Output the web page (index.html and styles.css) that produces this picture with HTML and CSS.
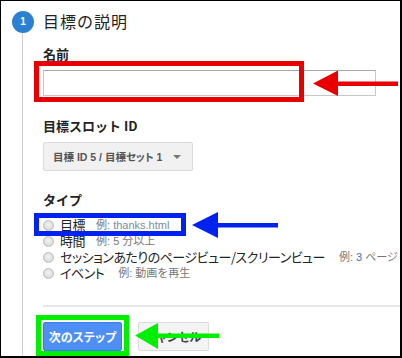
FILE: index.html
```html
<!DOCTYPE html>
<html lang="ja">
<head>
    <meta charset="UTF-8">
    <meta name="viewport" content="width=device-width, initial-scale=1.0">
    <title>目標の説明</title>
    <link rel="stylesheet" href="styles.css">
</head>
<body>

<div class="shot">
    <div class="frame">
        <!-- step rail -->
        <div class="rail">
            <div class="step-num">1</div>
            <div class="rail-line"></div>
        </div>

        <div class="panel">
            <h2 class="title">目標の説明</h2>

            <label class="field-label" for="goal_name">名前</label>
            <input type="text" class="text-input" id="goal_name">

            <div class="field-label slot-label">目標スロット ID</div>
            <div class="select-btn">
                <span>目標 ID 5 / 目標セット 1</span>
                <span class="caret"></span>
            </div>

            <div class="field-label type-label">タイプ</div>
            <ul class="type-list">
                <li><input type="radio" name="type" class="radio"><span class="type-name">目標</span><span class="hint">例: <span class="hint-url">thanks.html</span></span></li>
                <li><input type="radio" name="type" class="radio"><span class="type-name">時間</span><span class="hint">例: 5 分以上</span></li>
                <li><input type="radio" name="type" class="radio"><span class="type-name">セッションあたりのページビュー/スクリーンビュー</span><span class="hint hint-wide">例: <span class="hint-num">3</span> ページ</span></li>
                <li><input type="radio" name="type" class="radio"><span class="type-name">イベント</span><span class="hint hint-wide">例: 動画を再生</span></li>
            </ul>

            <div class="divider"></div>

            <div class="actions">
                <button type="button" class="btn btn-primary">次のステップ</button>
                <button type="button" class="btn btn-cancel">キャンセル</button>
            </div>
        </div>
    </div>

    <!-- annotation boxes -->
    <div class="mark mark-red"></div>
    <div class="mark mark-blue"></div>
    <div class="mark mark-green"></div>

    <svg class="arrows" width="402" height="358" viewBox="0 0 402 358">
        <polygon fill="#e80000" points="313,83.5 338,70.5 338,81.5 398,81.5 398,86 338,86 338,96"/>
        <polygon fill="#0022ee" points="192,225 218,212 218,223 278,223 278,227.5 218,227.5 218,238"/>
        <polygon fill="#00ee00" points="135,335.5 158,323 158,333.5 219,333.5 219,338 158,338 158,349"/>
    </svg>
</div>

</body>
</html>
```

FILE: styles.css
```css
body {
    margin: 0;
    font-family: "Liberation Sans", "Noto Sans CJK JP", sans-serif;
    color: #222;
}
.shot {
    position: relative;
    width: 402px;
    height: 358px;
    overflow: hidden;
    background: #fff;
}
.frame {
    box-sizing: border-box;
    width: 402px;
    height: 358px;
    border: solid #000;
    border-width: 1px 2px 2px 1px;
    display: flex;
}
.rail {
    width: 42px;
    flex: none;
    display: flex;
    flex-direction: column;
    padding-top: 10px;
}
.step-num {
    width: 22px;
    height: 22px;
    margin-left: 11px;
    border-radius: 50%;
    background: #2b80d2;
    color: #fff;
    font-size: 10px;
    font-weight: bold;
    line-height: 22px;
    text-align: center;
}
.rail-line {
    flex: 1;
    width: 1px;
    margin-left: 21px;
    background: #cfcfcf;
}
.panel {
    flex: 1;
    min-width: 0;
    padding-top: 10px;
}
.title {
    margin: 0;
    font-family: "Noto Sans CJK JP", sans-serif;
    font-size: 16px;
    font-weight: normal;
    line-height: 20px;
    letter-spacing: 1px;
    color: #222;
}
.field-label {
    display: block;
    margin-top: 15px;
    font-family: "Noto Sans CJK JP", sans-serif;
    font-size: 13px;
    font-weight: bold;
    line-height: 16px;
    color: #222;
}
.text-input {
    display: block;
    box-sizing: border-box;
    width: 333px;
    height: 26px;
    margin: 8px 0 0;
    border: 1px solid #c8c8c8;
    border-top-color: #a8a8a8;
    padding: 2px 6px;
}
.slot-label {
    margin-top: 22px;
}
.select-btn {
    box-sizing: border-box;
    width: 150px;
    height: 29px;
    margin-top: 8px;
    padding: 0 9px;
    display: flex;
    align-items: center;
    justify-content: space-between;
    background: #f1f1f1;
    border: 1px solid #dadada;
    border-radius: 2px;
    font-feature-settings: "palt";
    font-size: 10.5px;
    font-weight: bold;
    white-space: nowrap;
    color: #555;
}
.caret {
    width: 0;
    height: 0;
    margin-right: 2px;
    border-left: 4px solid transparent;
    border-right: 4px solid transparent;
    border-top: 4px solid #777;
}
.type-label {
    margin-top: 21px;
}
.type-list {
    list-style: none;
    margin: 9px 0 0;
    padding: 0;
}
.type-list li {
    display: flex;
    align-items: center;
    height: 16px;
    white-space: nowrap;
}
.radio {
    appearance: none;
    box-sizing: border-box;
    width: 11px;
    height: 11px;
    margin: 0 6px 0 0;
    border: 1px solid #bcbcbc;
    border-radius: 50%;
    background: radial-gradient(circle at 50% 40%, #f2f2f2, #d2d2d2);
}
.type-name {
    font-family: "Noto Sans CJK JP", sans-serif;
    font-feature-settings: "palt";
    font-size: 13px;
    line-height: 16px;
    letter-spacing: -0.5px;
    color: #222;
}
.hint {
    margin-left: 11px;
    font-size: 11px;
    line-height: 16px;
    color: #777;
}
.hint-wide {
    margin-left: 14px;
}
.hint-url {
    color: #7c8aa4;
}
.hint-num {
    color: #3a6fd8;
}
.divider {
    height: 2px;
    margin-top: 24px;
    background: #e6e6e6;
}
.actions {
    display: flex;
    gap: 16px;
    margin-top: 15px;
}
.btn {
    box-sizing: border-box;
    height: 29px;
    padding: 0;
    border: 1px solid #dcdcdc;
    border-radius: 2px;
    background: #f3f3f3;
    font-family: "Noto Sans CJK JP", sans-serif;
    font-feature-settings: "palt";
    font-size: 12px;
    font-weight: bold;
    white-space: nowrap;
    color: #444;
}
.btn-primary {
    width: 79px;
    background: #4d8ff5;
    border-color: #3b7de6;
    color: #fff;
}
.btn-cancel {
    width: 71px;
}
.mark {
    position: absolute;
    box-sizing: border-box;
    border: 5px solid;
}
.mark-red {
    left: 34px;
    top: 61px;
    width: 270px;
    height: 41px;
    border-color: #e80000;
}
.mark-blue {
    left: 34px;
    top: 213px;
    width: 152px;
    height: 23px;
    border-color: #0022ee;
}
.mark-green {
    left: 36px;
    top: 315px;
    width: 93px;
    height: 41px;
    border-color: #00ee00;
}
.arrows {
    position: absolute;
    left: 0;
    top: 0;
}
```
